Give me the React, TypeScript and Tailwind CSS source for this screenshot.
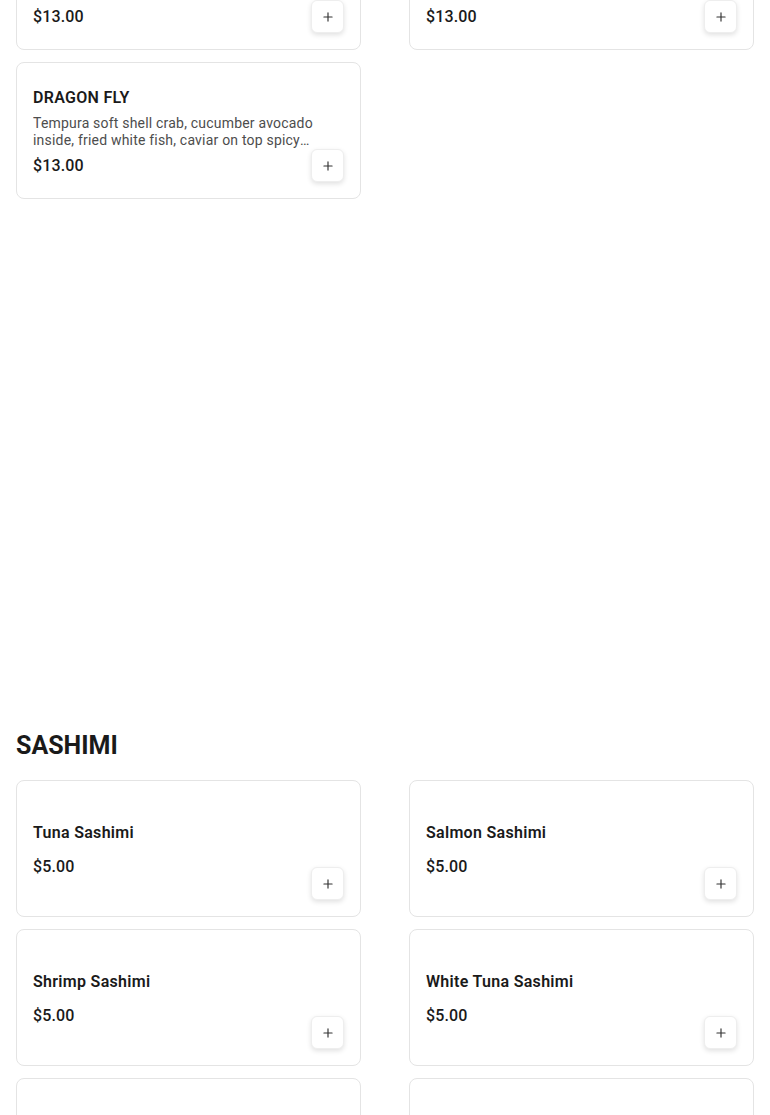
import { Plus } from 'lucide-react';

type Item = { name: string; description?: string; price: string };

const rolls: Item[] = [
  { name: 'RAINBOW ROLL', description: 'Crab salad, cucumber avocado inside, tuna, salmon, white fish and shrimp on top eel sauce', price: '$13.00' },
  { name: 'SPIDER ROLL', description: 'Fried soft shell crab, cucumber, avocado, masago, spicy mayo and eel sauce on top', price: '$13.00' },
  { name: 'DRAGON FLY', description: 'Tempura soft shell crab, cucumber avocado inside, fried white fish, caviar on top spicy mayo and eel sauce', price: '$13.00' },
];

const sashimi: Item[] = [
  { name: 'Tuna Sashimi', price: '$5.00' },
  { name: 'Salmon Sashimi', price: '$5.00' },
  { name: 'Shrimp Sashimi', price: '$5.00' },
  { name: 'White Tuna Sashimi', price: '$5.00' },
  { name: 'Yellowtail Sashimi', price: '$5.00' },
  { name: 'Eel Sashimi', price: '$5.00' },
];

function MenuCard({ item }: { item: Item }) {
  return (
    <div
      className={`relative flex min-h-[137px] flex-col justify-center rounded-lg border border-[#e4e4e4] bg-white px-4 ${
        item.description ? 'pt-[19px] pb-4' : 'pt-[18px] pb-4'
      }`}
    >
      <h3
        className={`text-[16px] leading-6 font-semibold tracking-[0.3px] text-[#1a1a1a] ${
          item.description ? 'mb-[5px]' : 'mb-[10px]'
        }`}
      >
        {item.name}
      </h3>
      {item.description && (
        <p className="mb-[5px] line-clamp-2 pr-2 text-[14px] leading-[17px] tracking-[0.2px] text-[#4d4d4d]">
          {item.description}
        </p>
      )}
      <div className="text-[16px] leading-6 font-medium tracking-[0.15px] text-[#1a1a1a]">{item.price}</div>
      <button className="absolute right-4 bottom-4 flex h-[33px] w-[33px] items-center justify-center rounded-md border border-[#eee] bg-white text-[#333] shadow-[0_2px_5px_rgba(0,0,0,0.12)]">
        <Plus size={14} strokeWidth={2} />
      </button>
    </div>
  );
}

export default function App() {
  return (
    <div className="min-h-screen overflow-hidden bg-white px-4 font-['Roboto',sans-serif]">
      <section className="-mt-[87px]">
        <div className="grid grid-cols-2 gap-x-12 gap-y-3">
          {rolls.map((item) => (
            <MenuCard key={item.name} item={item} />
          ))}
        </div>
      </section>

      <section className="mt-[529px]">
        <h2 className="mb-4 text-[25px] leading-9 font-bold text-[#1a1a1a]">SASHIMI</h2>
        <div className="grid grid-cols-2 gap-x-12 gap-y-3">
          {sashimi.map((item) => (
            <MenuCard key={item.name} item={item} />
          ))}
        </div>
      </section>
    </div>
  );
}
